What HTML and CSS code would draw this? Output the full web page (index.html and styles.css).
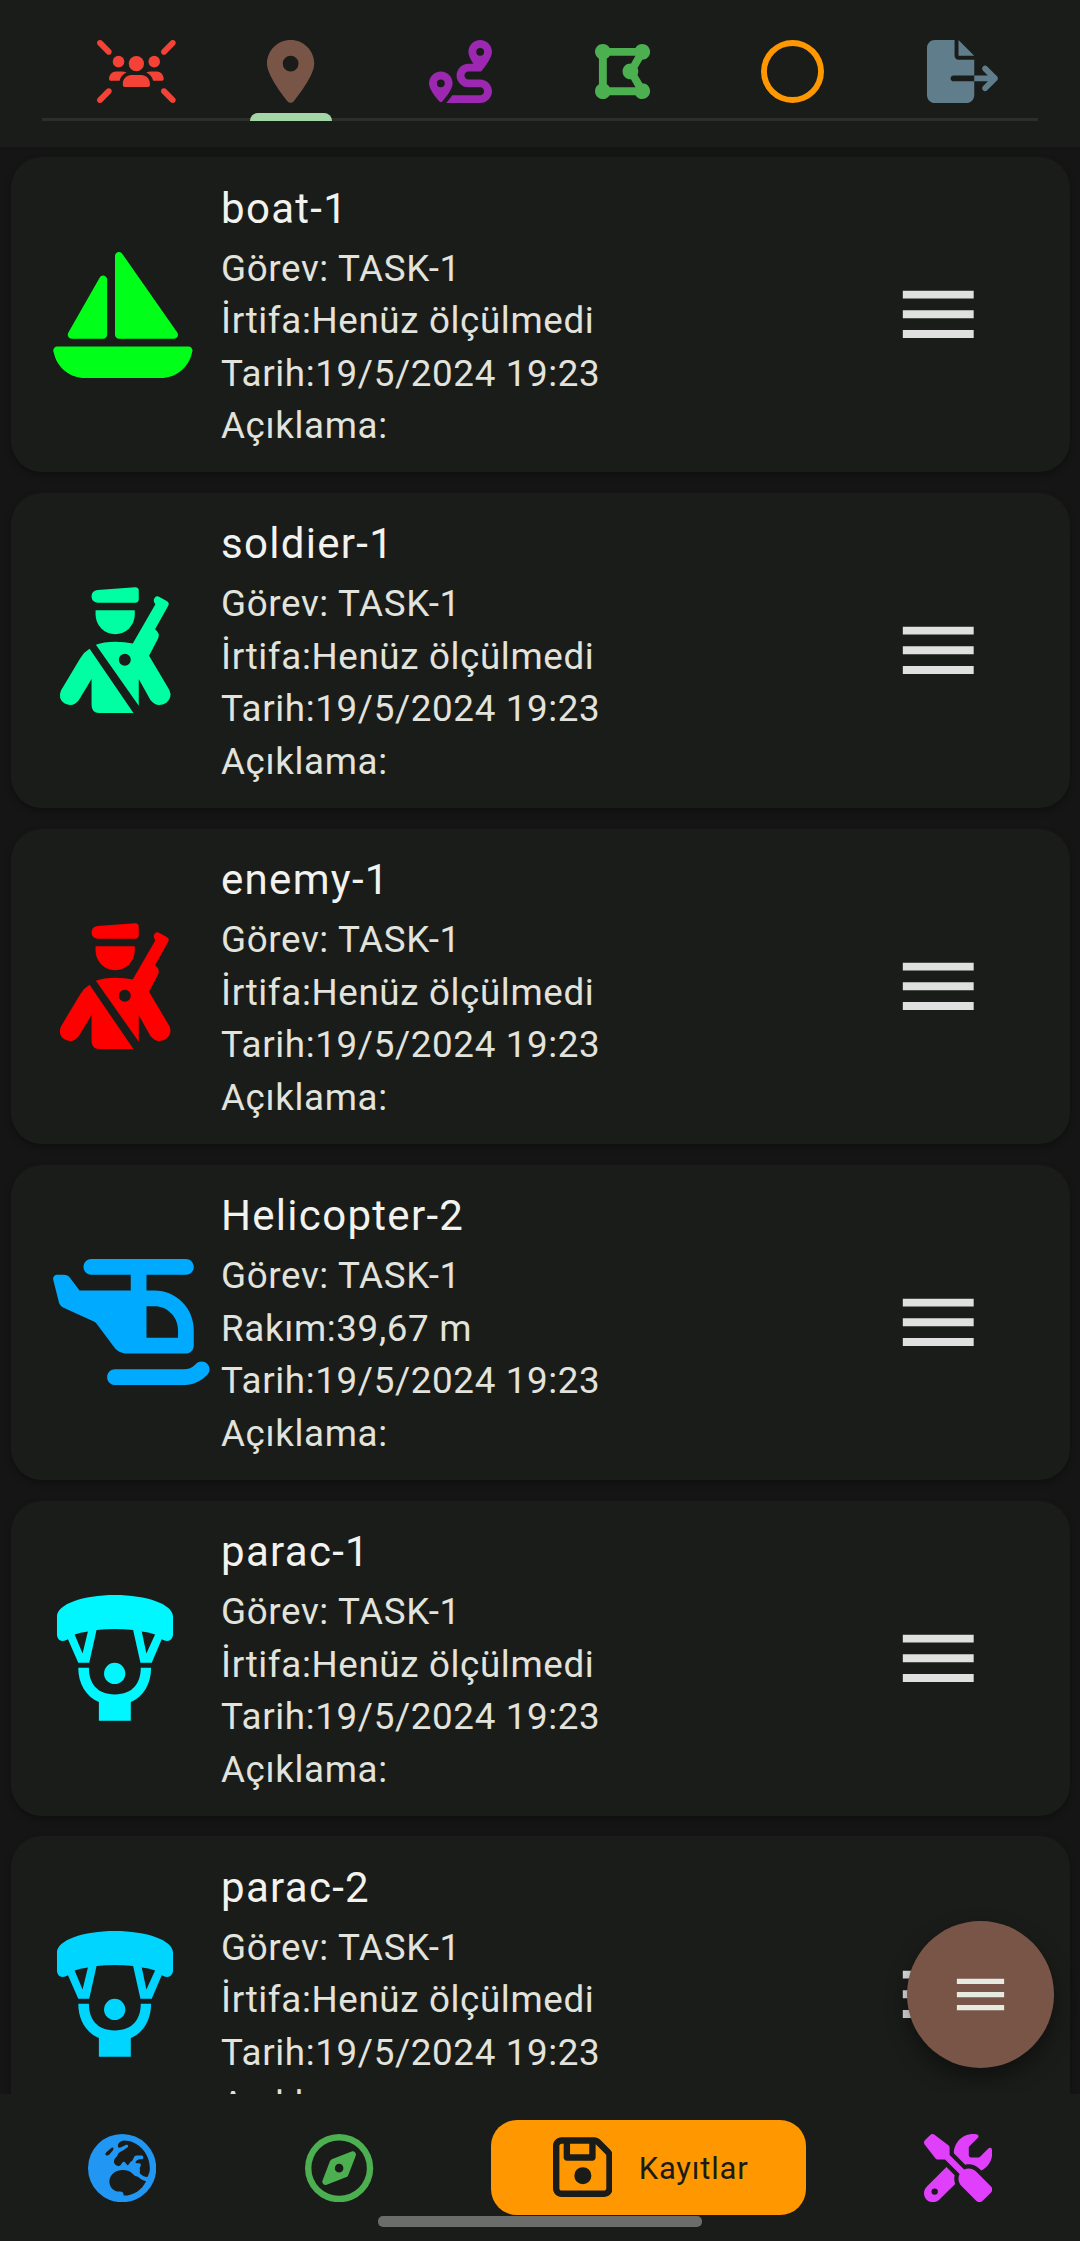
FILE: index.html
```html
<!DOCTYPE html>
<html lang="tr">
<head>
<meta charset="utf-8">
<title>Kayıtlar</title>
<link rel="stylesheet" href="styles.css">
</head>
<body>
<svg class="defs" aria-hidden="true">
  <symbol id="menu" viewBox="0 0 24 24"><path d="M3 18h18v-2H3v2zm0-5h18v-2H3v2zm0-7v2h18V6H3z"/></symbol>
  <symbol id="soldier" viewBox="66 83 379 379">
    <path d="M203 92L316 83.500Q327 83 327 94V119Q327 130 316 130H203Q185 128 185 111Q185 94 203 92z"/>
    <path d="M197 153H315V166A59 59 0 0 1 197 166z"/>
    <path fill-rule="evenodd" d="M198 257Q222 248 256 248Q286 248 309 253L377 135Q368 123 375 115Q380 109 388 112L411 125Q420 130 416 139L376 210Q392 222 385 238L358 290L419 393Q429 415 410 431Q382 448 362 423L327 360V440zM285 284a18 18 0 1 0 0 36a18 18 0 1 0 0-36z"/>
    <path d="M179 269L311 462H208Q185 462 185 438V360L147 423Q129 447 103 433Q83 418 93 394L151 297Q162 279 179 269z"/>
  </symbol>
  <symbol id="parachute" viewBox="68 78 379 379">
    <path fill-rule="evenodd" d="M83 143C83 106 161 78 257 78S432 106 432 143V198Q430 215 414 216Q406 216 398 211L368 282H334L312 183Q257 178 202 183L180 282H147L116 211Q108 216 100 216Q84 215 83 198zM136 197L160 254L176 188Q152 191 136 197zM338 188L352 254L378 197Q358 190 338 188z"/>
    <circle cx="256.500" cy="314" r="32"/>
    <path d="M147 297H179C179 342 202 377 257 377S335 342 335 297H366C366 346 343 384 305 400V456H209V400C171 384 147 346 147 297z"/>
  </symbol>
</svg>

<header class="topbar">
  <nav class="tabs">
    <a class="tab"><svg class="tab-icon red" viewBox="0 0 640 512"><path d="M41 7C31.600-2.300 16.400-2.300 7 7S-2.300 31.600 7 41l72 72c9.400 9.400 24.600 9.400 33.900 0s9.400-24.600 0-33.900L41 7zM599 7L527 79c-9.400 9.400-9.400 24.600 0 33.900s24.600 9.400 33.900 0l72-72c9.400-9.400 9.400-24.600 0-33.900s-24.600-9.400-33.900 0zM7 505c9.400 9.400 24.600 9.400 33.900 0l72-72c9.400-9.400 9.400-24.600 0-33.900s-24.600-9.400-33.900 0L7 471c-9.400 9.400-9.400 24.600 0 33.900zm592 0c9.400 9.400 24.600 9.400 33.900 0s9.400-24.600 0-33.900l-72-72c-9.400-9.400-24.600-9.400-33.900 0s-9.400 24.600 0 33.900l72 72z"/><circle cx="320" cy="192" r="62"/><circle cx="175" cy="176" r="47"/><circle cx="465" cy="176" r="47"/><path d="M280 284h80c39 0 70 31 70 70v12c0 9-7 16-16 16H226c-9 0-16-7-16-16v-12c0-39 31-70 70-70zM98 316c0-33 26-59 57-59h46c14 0 27 2 39 7-32 14-51 38-56 67H114c-9 0-16-7-16-15zM542 316c0-33-26-59-57-59h-46c-14 0-27 2-39 7 32 14 51 38 56 67h70c9 0 16-7 16-15z"/></svg></a>
    <a class="tab active"><svg class="tab-icon brown" viewBox="0 0 384 512"><path d="M215.700 499.200C267 435 384 279.400 384 192C384 86 298 0 192 0S0 86 0 192c0 87.400 117 243 168.300 307.200c12.300 15.300 35.100 15.300 47.400 0zM192 128a64 64 0 1 1 0 128 64 64 0 1 1 0-128z"/></svg></a>
    <a class="tab"><svg class="tab-icon purple" viewBox="0 0 512 512"><path d="M512 96c0 50.200-59.100 125.100-84.600 155c-3.800 4.400-9.400 6.100-14.500 5H320c-17.700 0-32 14.300-32 32s14.300 32 32 32h96c53 0 96 43 96 96s-43 96-96 96H139.600c8.700-9.900 19.300-22.600 30-36.800c6.300-8.400 12.800-17.600 19-27.200H416c17.700 0 32-14.300 32-32s-14.300-32-32-32H320c-53 0-96-43-96-96s43-96 96-96h39.800c-21-31.500-39.800-67.700-39.800-96c0-53 43-96 96-96s96 43 96 96zM117.100 489.100c-3.800 4.300-7.200 8.100-10.100 11.300l-1.800 2-.2-.2c-6 4.600-14.600 4-20-1.800C59.800 473 0 402.500 0 352c0-53 43-96 96-96s96 43 96 96c0 30-21.100 67-43.500 97.900c-10.700 14.700-21.700 28-30.800 38.500l-.6 .7zM128 352a32 32 0 1 0 -64 0 32 32 0 1 0 64 0zM416 128a32 32 0 1 0 0-64 32 32 0 1 0 0 64z"/></svg></a>
    <a class="tab"><svg class="tab-icon green" viewBox="0 0 448 512"><path d="M96 151.400V360.600c9.700 5.600 17.800 13.700 23.400 23.400H328.600c0-.1 .1-.2 .1-.3l-4.500-7.900-32-56 0 0c-1.400 .1-2.800 .1-4.200 .1c-35.300 0-64-28.700-64-64s28.700-64 64-64c1.400 0 2.800 0 4.200 .1l0 0 32-56 4.500-7.900-.1-.3H119.400c-5.600 9.700-13.700 17.800-23.400 23.400zM384.300 352c35.200 .2 63.700 28.700 63.700 64c0 35.300-28.700 64-64 64c-23.700 0-44.400-12.900-55.400-32H119.400c-11.100 19.100-31.700 32-55.400 32c-35.300 0-64-28.700-64-64c0-23.700 12.900-44.400 32-55.400V151.400C12.900 140.400 0 119.700 0 96C0 60.700 28.700 32 64 32c23.700 0 44.400 12.900 55.400 32H328.600c11.100-19.100 31.700-32 55.400-32c35.300 0 64 28.700 64 64c0 35.300-28.500 63.800-63.700 64l-4.500 7.900-32 56-2.300 4c4.200 8.500 6.500 18 6.500 28.100s-2.300 19.600-6.500 28.100l2.300 4 32 56 4.500 7.900z"/></svg></a>
    <a class="tab"><svg class="tab-icon orange" viewBox="0 0 512 512"><path d="M464 256A208 208 0 1 0 48 256a208 208 0 1 0 416 0zM0 256a256 256 0 1 1 512 0A256 256 0 1 1 0 256z"/></svg></a>
    <a class="tab"><svg class="tab-icon slate" viewBox="0 0 576 512"><path d="M0 64C0 28.700 28.700 0 64 0H224V128c0 17.700 14.300 32 32 32H384V288H216c-13.300 0-24 10.700-24 24s10.700 24 24 24H384V448c0 35.300-28.700 64-64 64H64c-35.300 0-64-28.700-64-64V64zM384 336V288H494.100l-39-39c-9.400-9.400-9.400-24.600 0-33.900s24.600-9.400 33.900 0l80 80c9.400 9.400 9.400 24.600 0 33.900l-80 80c-9.400 9.400-24.600 9.400-33.900 0s-9.400-24.600 0-33.900l39-39H384zm0-208H256V0L384 128z"/></svg></a>
  </nav>
</header>

<main class="list">
  <article class="card">
    <div class="marker"><svg class="lime" viewBox="0 0 576 512"><path d="M256 16c0-7 4.500-13.200 11.200-15.300s13.900 .4 17.900 6.100l224 320c3.400 4.900 3.800 11.300 1.100 16.600s-8.200 8.600-14.200 8.600H272c-8.800 0-16-7.200-16-16V16zM212.100 96.500c7 1.900 11.900 8.200 11.900 15.500V336c0 8.800-7.200 16-16 16H80c-5.700 0-11-3-13.800-8s-2.900-11-.1-16l128-224c3.600-6.300 11-9.400 18-7.500zM5.700 404.300C2.800 394.100 10.500 384 21.100 384H554.900c10.600 0 18.300 10.100 15.400 20.300l-4 14.300C550.700 473.900 500.400 512 443 512H133C75.600 512 25.300 473.900 9.700 418.600l-4-14.300z"/></svg></div>
    <div class="info"><h2>boat-1</h2><p>Görev: TASK-1</p><p>İrtifa:Henüz ölçülmedi</p><p>Tarih:19/5/2024 19:23</p><p>Açıklama:</p></div>
    <svg class="menu"><use href="#menu"/></svg>
  </article>
  <article class="card">
    <div class="marker"><svg class="mint square"><use href="#soldier"/></svg></div>
    <div class="info"><h2>soldier-1</h2><p>Görev: TASK-1</p><p>İrtifa:Henüz ölçülmedi</p><p>Tarih:19/5/2024 19:23</p><p>Açıklama:</p></div>
    <svg class="menu"><use href="#menu"/></svg>
  </article>
  <article class="card">
    <div class="marker"><svg class="enemy square"><use href="#soldier"/></svg></div>
    <div class="info"><h2>enemy-1</h2><p>Görev: TASK-1</p><p>İrtifa:Henüz ölçülmedi</p><p>Tarih:19/5/2024 19:23</p><p>Açıklama:</p></div>
    <svg class="menu"><use href="#menu"/></svg>
  </article>
  <article class="card">
    <div class="marker"><svg class="azure" viewBox="0 0 640 512"><path d="M128 32c0-17.700 14.300-32 32-32H544c17.700 0 32 14.300 32 32s-14.300 32-32 32H384v64h32c88.400 0 160 71.600 160 160v64c0 17.700-14.300 32-32 32H384 304c-20.100 0-39.100-9.500-51.200-25.600l-71.400-95.200c-3.500-4.700-8.300-8.300-13.700-10.500L47.200 198.100c-9.500-3.800-16.700-12-19.200-22L5 83.900C2.400 73.800 10.100 64 20.500 64H48c10.100 0 19.600 4.700 25.600 12.800L112 128H320V64H160c-17.700 0-32-14.300-32-32zM384 320H512V288c0-53-43-96-96-96H384V320zM630.600 425.400c12.500 12.500 12.500 32.800 0 45.300l-3.900 3.900c-24 24-56.600 37.500-90.500 37.500H256c-17.700 0-32-14.300-32-32s14.300-32 32-32H536.200c17 0 33.300-6.700 45.300-18.700l3.900-3.900c12.500-12.500 32.800-12.500 45.300 0z"/></svg></div>
    <div class="info"><h2>Helicopter-2</h2><p>Görev: TASK-1</p><p>Rakım:39,67 m</p><p>Tarih:19/5/2024 19:23</p><p>Açıklama:</p></div>
    <svg class="menu"><use href="#menu"/></svg>
  </article>
  <article class="card">
    <div class="marker"><svg class="cyan square"><use href="#parachute"/></svg></div>
    <div class="info"><h2>parac-1</h2><p>Görev: TASK-1</p><p>İrtifa:Henüz ölçülmedi</p><p>Tarih:19/5/2024 19:23</p><p>Açıklama:</p></div>
    <svg class="menu"><use href="#menu"/></svg>
  </article>
  <article class="card">
    <div class="marker"><svg class="sky square"><use href="#parachute"/></svg></div>
    <div class="info"><h2>parac-2</h2><p>Görev: TASK-1</p><p>İrtifa:Henüz ölçülmedi</p><p>Tarih:19/5/2024 19:23</p><p>Açıklama:</p></div>
    <svg class="menu"><use href="#menu"/></svg>
  </article>
  <button class="fab" aria-label="Menü"><svg><use href="#menu"/></svg></button>
</main>

<footer class="bottombar">
  <a class="nav globe"><svg class="blue" viewBox="0 0 512 512"><path fill-rule="evenodd" d="M256 0a256 256 0 1 1 0 512A256 256 0 1 1 256 0zM268 48C250 50 234 60 226 76C220 90 226 104 240 104L280 84C294 76 308 88 298 100L262 124C240 134 226 142 224 154C218 172 196 184 194 204C194 224 208 238 228 240C242 242 250 226 260 212C266 204 276 208 282 218L294 232C304 240 306 222 312 220C318 206 320 208 330 202C342 190 344 162 364 162H404C418 164 418 188 404 190H386C370 192 352 208 358 216C364 224 394 214 396 228C400 240 386 248 388 260C394 276 384 284 390 296C402 310 424 322 446 322C458 300 464 278 464 256C464 142 372 46 268 48zM184 102C172 106 130 140 130 152C134 166 152 164 160 154L186 124C192 112 194 102 184 102zM252 270C194 274 160 316 160 358C162 402 196 432 234 432C254 430 266 436 268 462C340 464 404 420 436 354C412 348 390 334 372 318C346 322 330 284 300 276C286 272 270 268 252 270z"/></svg></a>
  <a class="nav compass"><svg class="green" viewBox="0 0 512 512"><path d="M464 256A208 208 0 1 0 48 256a208 208 0 1 0 416 0zM0 256a256 256 0 1 1 512 0A256 256 0 1 1 0 256zm306.700 69.100L162.400 380.600c-19.400 7.500-38.500-11.600-31-31l55.500-144.300c3.300-8.500 9.900-15.100 18.400-18.400l144.300-55.500c19.400-7.500 38.500 11.600 31 31L325.100 306.700c-3.200 8.500-9.900 15.100-18.400 18.400zM288 256a32 32 0 1 0 -64 0 32 32 0 1 0 64 0z"/></svg></a>
  <a class="nav records"><svg viewBox="0 0 448 512"><path d="M48 96V416c0 8.800 7.200 16 16 16H384c8.800 0 16-7.200 16-16V170.500c0-4.200-1.700-8.300-4.700-11.300l33.900-33.900c12 12 18.700 28.300 18.700 45.300V416c0 35.300-28.700 64-64 64H64c-35.300 0-64-28.700-64-64V96C0 60.700 28.700 32 64 32H309.500c17 0 33.300 6.700 45.300 18.700l74.500 74.500-33.900 33.900L320.800 84.700c-.3-.3-.5-.5-.8-.8V184c0 13.300-10.700 24-24 24H104c-13.300 0-24-10.700-24-24V80H64c-8.800 0-16 7.200-16 16zm80-16v80H272V80H128zm32 240a64 64 0 1 1 128 0 64 64 0 1 1 -128 0z"/></svg><span>Kayıtlar</span></a>
  <a class="nav tools"><svg class="magenta" viewBox="0 0 512 512"><path d="M78.600 5C69.100-2.400 55.600-1.500 47 7L7 47c-8.500 8.500-9.400 22-2.100 31.600l80 104c4.500 5.900 11.600 9.400 19 9.400h54.100l109 109c-14.700 29-10 65.400 14.300 89.600l112 112c12.500 12.500 32.800 12.500 45.300 0l64-64c12.500-12.500 12.500-32.800 0-45.300l-112-112c-24.200-24.200-60.600-29-89.600-14.300l-109-109V104c0-7.500-3.500-14.500-9.400-19L78.600 5zM19.900 396.100C7.200 408.800 0 426.100 0 444.100C0 481.600 30.400 512 67.900 512c18 0 35.300-7.200 48-19.900L233.700 374.300c-7.800-20.900-9-43.600-3.600-65.100l-61.700-61.700L19.900 396.100zM512 144c0-10.500-1.100-20.700-3.200-30.500c-2.400-11.200-16.100-14.100-24.200-6l-63.900 63.900c-3 3-7.100 4.700-11.300 4.700H352c-8.800 0-16-7.200-16-16V102.600c0-4.200 1.700-8.300 4.700-11.300l63.900-63.900c8.100-8.100 5.200-21.800-6-24.200C388.700 1.100 378.500 0 368 0C288.500 0 224 64.500 224 144l0 .8 85.300 85.300c36-9.100 75.800 .5 104 28.700L429 274.500c49-23 83-72.800 83-130.500zM56 432a24 24 0 1 1 48 0 24 24 0 1 1 -48 0z"/></svg></a>
  <div class="gesture"></div>
</footer>
</body>
</html>
```

FILE: styles.css
```css
* { box-sizing: border-box; }

body {
  margin: 0;
  width: 1080px;
  height: 2241px;
  display: flex;
  flex-direction: column;
  overflow: hidden;
  background: #151515;
  color: #e2e3dd;
  font-family: Roboto, "Noto Sans", sans-serif;
}

svg { display: block; fill: currentColor; flex: none; }
.defs { position: absolute; width: 0; height: 0; }

.topbar { flex: none; height: 147px; padding: 0 42px; background: #1a1c19; }
.tabs {
  height: 121px;
  display: grid;
  grid-template-columns: repeat(6, 166px);
  background: linear-gradient(#2c2e2b, #2c2e2b) bottom / 100% 3px no-repeat;
}
.tab {
  display: flex;
  flex-direction: column;
  justify-content: space-between;
  padding: 40px 0 0 55px;
}
.tab-icon { height: 63px; align-self: flex-start; }
.tab.active { padding-left: 0; align-items: center; }
.tab.active .tab-icon { align-self: center; }
.tab.active::after {
  content: "";
  width: 82px;
  height: 8px;
  border-radius: 8px 8px 0 0;
  background: #a5d6a7;
}

.list {
  position: relative;
  height: 1947px;
  overflow: hidden;
  display: flex;
  flex-direction: column;
  gap: 20.900px;
  padding: 10px 10.500px;
}
.card {
  flex: none;
  height: 315px;
  display: flex;
  align-items: center;
  padding: 0 84.500px 0 41.500px;
  border-radius: 31px;
  background: #1a1c19;
  box-shadow: 0 3px 6px rgba(0, 0, 0, .3);
}
.marker { width: 169px; }
.marker svg { height: 126px; }
.marker .square { width: 126px; }
.info { flex: 1; padding-top: 3px; }
.info h2 {
  margin: -3px 0 3px;
  font-size: 42px;
  line-height: 63px;
  font-weight: 400;
  letter-spacing: 1.300px;
  color: #f2f2ee;
}
.info p {
  margin: 0;
  font-size: 36.750px;
  line-height: 52.500px;
  letter-spacing: .64px;
}
.menu { width: 94.500px; height: 94.500px; color: #e0e0e0; }

.fab {
  position: absolute;
  right: 26px;
  bottom: 26px;
  width: 147px;
  height: 147px;
  padding: 0;
  border: 0;
  border-radius: 50%;
  display: grid;
  place-items: center;
  background: #795548;
  color: #e6ebe0;
  box-shadow: 0 10px 22px rgba(0, 0, 0, .4);
}
.fab svg { width: 63px; height: 63px; }

.bottombar {
  position: relative;
  flex: 1;
  display: flex;
  align-items: flex-start;
  gap: 117.500px;
  padding: 26px 88px 0;
  background: #1a1c19;
}
.nav { display: flex; align-items: center; height: 96px; }
.nav svg { width: 68.250px; height: 68.250px; }
.globe { margin-right: 31.500px; }
.nav.records {
  flex: none;
  width: 315px;
  height: 95px;
  padding-left: 61.500px;
  gap: 26.500px;
  border-radius: 26px;
  background: #ff9800;
  color: #1a1c19;
  font-size: 31px;
  letter-spacing: .8px;
}
.records svg { width: 59.700px; }
.records span { padding-top: 2px; }
.gesture {
  position: absolute;
  left: 378px;
  top: 122px;
  width: 324px;
  height: 11px;
  border-radius: 5px;
  background: #6b6d6a;
}

.red { color: #f44336; }
.brown { color: #795548; }
.purple { color: #9c27b0; }
.green { color: #4caf50; }
.orange { color: #ff9800; }
.slate { color: #607d8b; }
.lime { color: #00ff19; }
.mint { color: #00ffa2; }
.enemy { color: #ff0000; }
.azure { color: #00aaff; }
.cyan { color: #00f7ff; }
.sky { color: #00d5ff; }
.blue { color: #2196f3; }
.magenta { color: #e040fb; }
```
